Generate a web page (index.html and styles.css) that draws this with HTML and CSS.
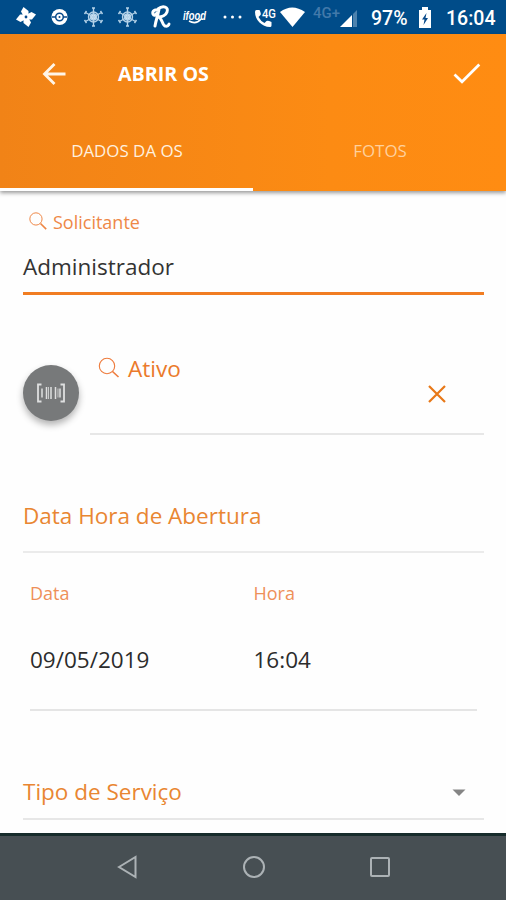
FILE: index.html
```html
<!DOCTYPE html>
<html lang="pt-BR">
<head>
<meta charset="utf-8">
<title>Abrir OS</title>
<link rel="stylesheet" href="styles.css">
</head>
<body>
<div class="screen">
  <div class="status">
    <svg class="notifications" width="246" height="34" viewBox="0 0 246 34">
      <g fill="#fff" transform="translate(26 17)">
        <path id="blade" d="M-1.500 1L-5-5.500-2.500-10 2.500-6V0z"/>
        <use href="#blade" transform="rotate(90)"/><use href="#blade" transform="rotate(180)"/><use href="#blade" transform="rotate(270)"/>
        <circle r="1.400" fill="#07498a"/>
      </g>
      <circle cx="59.500" cy="17" r="8" fill="#fff"/>
      <path d="M52 17h15" stroke="#07498a" stroke-width="1.500"/>
      <circle cx="59.500" cy="17" r="3.800" fill="#fff" stroke="#07498a" stroke-width="1.500"/>
      <circle cx="59.500" cy="17" r="1" fill="#07498a"/>
      <g id="wheel" transform="translate(93.500 17)" fill="none" stroke="#b4d2e8" stroke-width="1.400">
        <circle r="5"/><circle r="3" fill="#e5f1fa"/>
        <path d="M0-9V9M-8-4.500L8 4.500M-8 4.500L8-4.500"/>
        <path d="M-1.500-9h3M-1.500 9h3M-9-3l2-3M7-6l2 3M-9 3l2 3M7 6l2-3"/>
      </g>
      <use href="#wheel" x="34"/>
      <path d="M159 10c-4-1-7 1-6 4 1 2 3 1 4-1M159 9c-1 6-3 11-4 17M158 9c5-4 11-2 9 3-1 3-5 5-9 5 4 0 4 8 7 9 2 1 4-1 4-2" fill="none" stroke="#fff" stroke-width="3" stroke-linecap="round"/>
      <path d="M189 21q7 4 12-2" fill="none" stroke="#fff" stroke-width="1.700"/>
      <text class="food" x="183" y="20" textLength="23" lengthAdjust="spacingAndGlyphs">ifood</text>
      <g fill="#fff"><circle cx="225" cy="17" r="1.500"/><circle cx="232.500" cy="17" r="1.500"/><circle cx="240" cy="17" r="1.500"/></g>
    </svg>
    <svg width="112" height="34" viewBox="246 0 112 34">
      <path d="M255 12c0 8 7 15 15 15q1.500 0 1.500-1.500V22q-4-2-5-1l-2 2q-4-2-6-6l2-2q1-1-1-5h-3q-1.500 0-1.500 2z" fill="#fff"/>
      <text class="call-net" x="262" y="17.500" textLength="14" lengthAdjust="spacingAndGlyphs">4G</text>
      <path d="M280 12q12-9 25 0L292.500 27z" fill="#fff"/>
      <text class="cell-net" x="313" y="18" textLength="27" lengthAdjust="spacingAndGlyphs">4G+</text>
      <path d="M340 27L352 15V27z" fill="#fff"/><path d="M353 14l4-4V27h-4z" fill="#4c82ae"/>
    </svg>
    <span class="battery-level">97%</span>
    <svg class="battery" width="14" height="22" viewBox="0 0 14 22">
      <path d="M1 3h3V0h6v3h3v18H1z" fill="#fff"/><path d="M8.500 6L4 12.500h2.500L5.500 18 10 11H7.500z" fill="#07498a"/>
    </svg>
    <span class="clock">16:04</span>
  </div>

  <header class="header">
    <div class="toolbar">
      <svg class="back" width="26" height="24" viewBox="0 0 26 24" fill="none" stroke="#fff5e8" stroke-width="2.800"><path d="M12.500 2L2.500 12l10 10M3 12h20.500"/></svg>
      <h1 class="title">ABRIR OS</h1>
      <svg class="confirm" width="28" height="22" viewBox="0 0 28 22" fill="none" stroke="#fff" stroke-width="2.700"><path d="M1.500 11.500L9 18.800 26.300 1.500"/></svg>
    </div>
    <nav class="tabs">
      <div class="tab active"><span class="dados">DADOS DA OS</span></div>
      <div class="tab"><span class="fotos">FOTOS</span></div>
    </nav>
  </header>

  <main class="form">
    <section class="requester">
      <div class="label small">
        <svg width="18" height="18" viewBox="0 0 22 22" fill="none" stroke="#ee8543"><circle cx="8.500" cy="8.500" r="7.500" stroke-width="1.200"/><path d="M14 14l7 7" stroke-width="2"/></svg>
        <span>Solicitante</span>
      </div>
      <div class="value">Administrador</div>
    </section>
    <section class="asset">
      <div class="scan">
        <svg width="30" height="20" viewBox="0 0 30 20" fill="none" stroke="#dedfdf" stroke-width="1.800"><path d="M5.500 1.500H2v17h3.500M24.500 1.500H28v17h-3.500"/><path d="M6 5.500v9M10.500 4v12M15 4v12M19.500 4v12M24 5.500v9" stroke-width="1.500"/><path d="M12.500 4v12M22 5.500v9" stroke-width=".8"/></svg>
      </div>
      <div class="asset-field">
        <div class="label">
          <svg width="22" height="22" viewBox="0 0 22 22" fill="none" stroke="#ee7b3c"><circle cx="9" cy="9" r="7.700" stroke-width="1.100"/><path d="M14.500 14.500l6 5.500" stroke-width="1.600"/></svg>
          <span>Ativo</span>
        </div>
        <svg class="clear" width="18" height="18" viewBox="0 0 18 18" fill="none" stroke="#e87817" stroke-width="2.200"><path d="M1 1l16 16M17 1L1 17"/></svg>
      </div>
    </section>
    <h2 class="heading opening">Data Hora de Abertura</h2>
    <section class="datetime">
      <div class="col"><span class="caption">Data</span><span class="data">09/05/2019</span></div>
      <div class="col"><span class="caption">Hora</span><span class="data">16:04</span></div>
    </section>
    <section class="service">
      <span class="heading">Tipo de Serviço</span>
      <svg width="14" height="8" viewBox="0 0 14 8"><path d="M.5.500h13L7 7z" fill="#858585"/></svg>
    </section>
  </main>

  <div class="navbar">
    <svg width="22" height="24" viewBox="0 0 22 24"><path d="M3 12L19.500 2v20z"/></svg>
    <svg width="24" height="24" viewBox="0 0 24 24"><circle cx="12" cy="12" r="10"/></svg>
    <svg width="22" height="22" viewBox="0 0 22 22"><rect x="2" y="2" width="18" height="18" rx="1"/></svg>
  </div>
</div>
</body>
</html>
```

FILE: styles.css
```css
* { box-sizing: border-box; }
body { margin: 0; }
svg { display: block; flex: none; }
.screen {
  width: 506px;
  height: 900px;
  display: flex;
  flex-direction: column;
  overflow: hidden;
  background: #fefefe;
  font-family: "Open Sans", sans-serif;
}

.status {
  height: 34px;
  flex: none;
  display: flex;
  align-items: center;
  background: #004c89;
  color: #fff;
  font: 500 19.5px/34px Roboto, sans-serif;
}
.food { font: italic 700 12px "Liberation Sans", sans-serif; fill: #fff; }
.call-net { font: 500 13px Roboto, sans-serif; fill: #fff; }
.cell-net { font: 500 15px Roboto, sans-serif; fill: #4279aa; }
.battery-level { width: 60px; padding: 3px 0 0 13px; }
.battery { margin-top: 1px; }
.clock { padding: 3px 0 0 14px; }

.header {
  height: 157px;
  flex: none;
  display: flex;
  flex-direction: column;
  background: linear-gradient(90deg, #f18317, #fc8b13 65%, #ff8c12);
  box-shadow: 0 2px 4px rgba(0, 0, 0, .4);
  color: #fff;
}
.toolbar { height: 79px; display: flex; align-items: center; padding: 0 25px 0 42px; }
.title { margin: 0 0 0 50px; font-size: 19.7px; line-height: 28px; font-weight: 700; }
.confirm { margin-left: auto; }
.tabs { flex: 1; display: flex; }
.tab {
  flex: 1;
  padding: 25px 0 0 1px;
  text-align: center;
  font-size: 16.9px;
  line-height: 26px;
  color: #ffd09c;
}
.tab.active { color: #fff0df; border-bottom: 3px solid #fff; }

.form { padding: 0 22px 0 23px; flex: none; height: 642px; }
.label { display: flex; color: #eb7a2b; font-size: 22.6px; line-height: 32px; }
.label.small { font-size: 18px; line-height: 26px; padding: 18px 0 0 6px; gap: 6px; color: #ee8847; }
.label.small svg { margin-top: 3px; }
.requester { height: 104px; border-bottom: 3px solid #f17d22; }
.value { margin-top: 16px; font-size: 22.5px; line-height: 32px; color: #333; }

.asset { display: flex; height: 140px; gap: 11px; }
.scan {
  width: 56px;
  height: 56px;
  margin-top: 70px;
  display: grid;
  place-items: center;
  border-radius: 50%;
  background: #77797a;
  box-shadow: 0 4px 7px rgba(0, 0, 0, .3);
}
.asset-field {
  flex: 1;
  display: flex;
  justify-content: space-between;
  padding: 58px 38px 0 8px;
  border-bottom: 2px solid #e7e7e7;
}
.asset-field .label { gap: 8px; }
.asset-field .label svg { margin-top: 4px; }
.clear { margin-top: 32px; }

.heading { font-size: 22.5px; line-height: 32px; font-weight: 400; color: #e98632; }
.opening { height: 118px; margin: 0; padding-top: 65px; border-bottom: 2px solid #ebebeb; }
.datetime { display: flex; height: 158px; margin: 0 7px; border-bottom: 2px solid #e5e5e5; }
.col { flex: 1; display: flex; flex-direction: column; }
.caption { padding-top: 27px; font-size: 18px; line-height: 26px; color: #ee9059; }
.data { margin-top: 38px; font-size: 22.5px; line-height: 32px; color: #2c2c2c; }
.service {
  height: 109px;
  display: flex;
  align-items: flex-start;
  justify-content: space-between;
  padding: 65px 18px 0 0;
  border-bottom: 2px solid #e7e7e7;
}
.service svg { margin-top: 13px; }

.navbar {
  flex: 1;
  display: flex;
  align-items: center;
  justify-content: space-between;
  padding: 0 115px 2px 116px;
  border-top: 3px solid #172c2c;
  background: #474f53;
}
.navbar svg { fill: none; stroke: #acb2b5; stroke-width: 2; }
```
